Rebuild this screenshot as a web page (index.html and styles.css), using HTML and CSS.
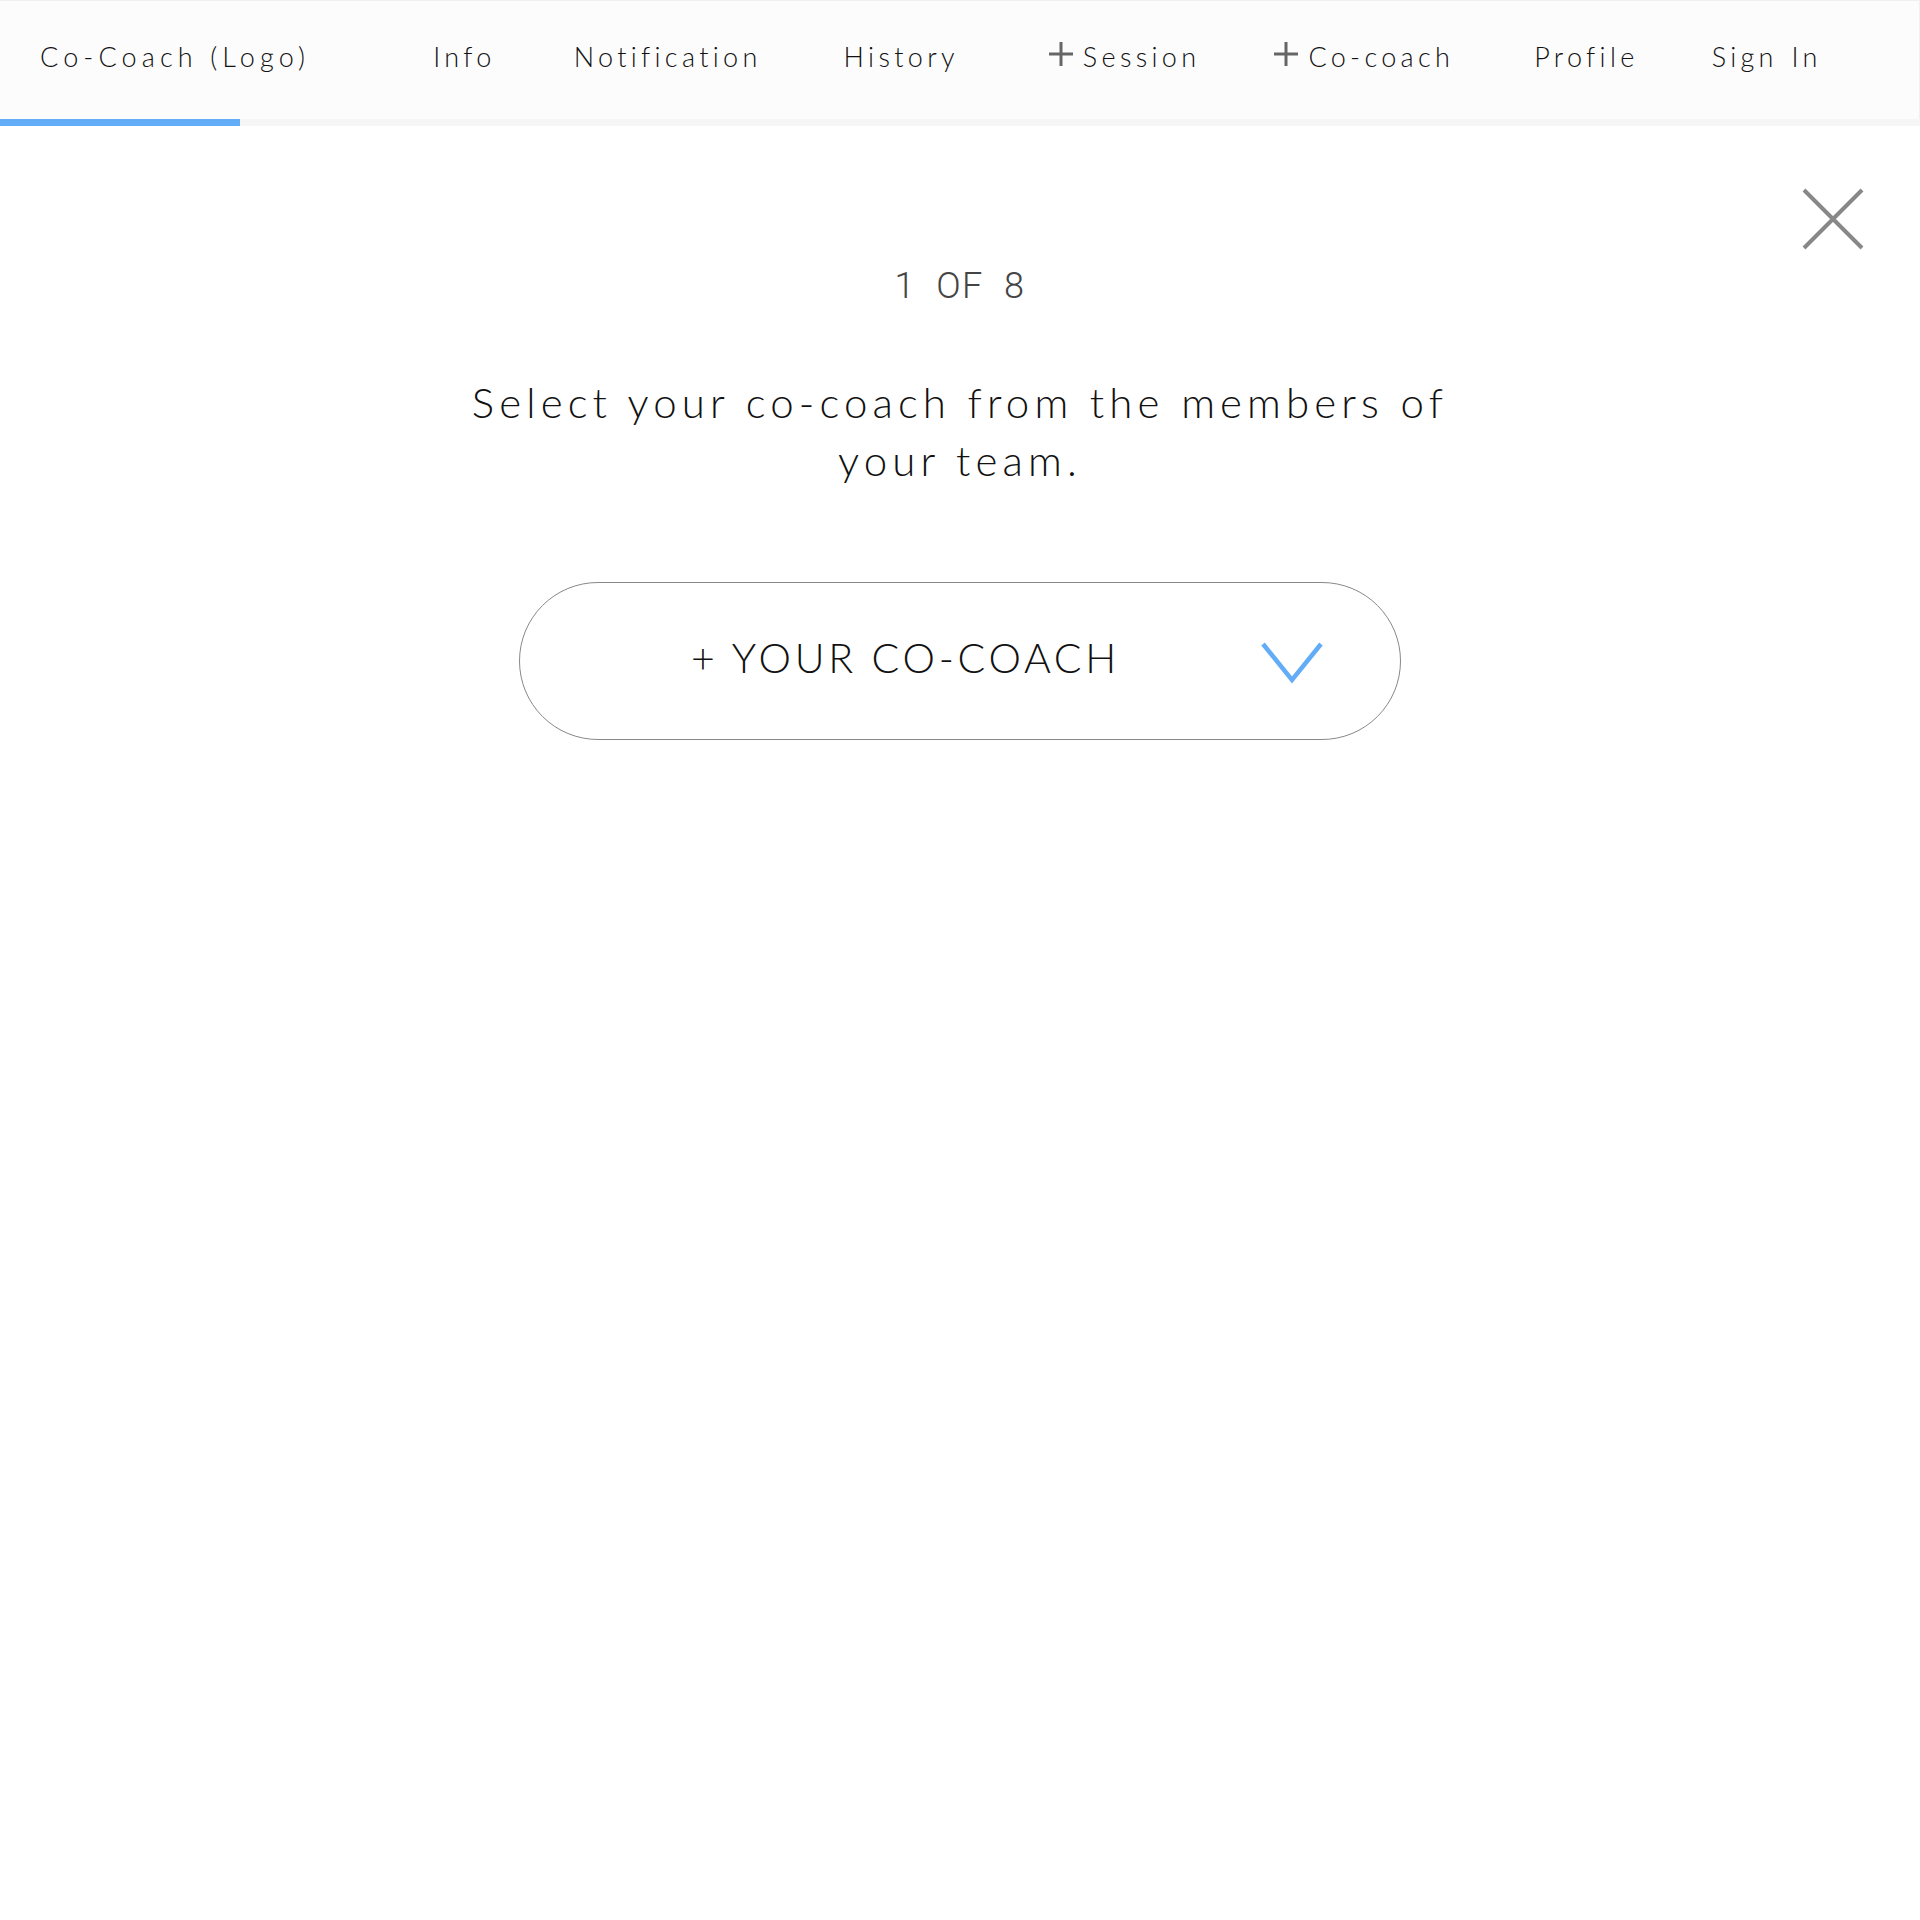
FILE: index.html
```html
<!DOCTYPE html>
<html lang="en">
<head>
<meta charset="utf-8">
<title>Co-Coach</title>
<link rel="stylesheet" href="styles.css">
</head>
<body>
<header class="topbar">
  <nav class="nav">
    <a class="logo">Co-Coach (Logo)</a>
    <ul class="menu">
      <li class="item">Info</li>
      <li class="item item-notification">Notification</li>
      <li class="item item-history">History</li>
      <li class="item item-session"><svg class="plus" viewBox="0 0 24 24"><path d="M12 0V24M0 12H24"/></svg>Session</li>
      <li class="item item-cocoach"><svg class="plus" viewBox="0 0 24 24"><path d="M12 0V24M0 12H24"/></svg>Co-coach</li>
      <li class="item item-profile">Profile</li>
      <li class="item item-signin">Sign In</li>
    </ul>
  </nav>
  <div class="progress"><div class="progress-fill"></div></div>
</header>
<main class="wizard">
  <button class="close" aria-label="Close"><svg viewBox="0 0 62 62"><path d="M2 2L60 60M60 2L2 60"/></svg></button>
  <div class="step">1 OF 8</div>
  <h1 class="prompt">Select your co-coach from the members of your team.</h1>
  <div class="select">
    <span class="select-label">+ YOUR CO-COACH</span>
    <svg class="chevron" viewBox="0 0 62 42"><path d="M2 2L31 38L60 2"/></svg>
  </div>
</main>
</body>
</html>
```
FILE: styles.css
```css
html, body {
  margin: 0;
  padding: 0;
  background: #ffffff;
}
body {
  font-family: Lato, "Noto Sans", sans-serif;
  font-weight: 300;
  color: #111111;
}
.topbar {
  display: flex;
  flex-direction: column;
}
.nav {
  height: 119px;
  box-sizing: border-box;
  border-top: 1px solid #f0f0f0;
  border-right: 1px solid #f0f0f0;
  background: #fcfcfc;
  display: flex;
  align-items: center;
  padding: 0 0 8px 40px;
}
.logo {
  font-size: 27px;
  letter-spacing: 0.19em;
  color: #111;
  white-space: nowrap;
}
.menu {
  list-style: none;
  margin: 0 0 0 123px;
  padding: 0;
  display: flex;
  align-items: center;
  gap: 80px;
}
.item {
  font-size: 27px;
  letter-spacing: 0.16em;
  word-spacing: 2px;
  color: #111;
  display: flex;
  align-items: center;
  white-space: nowrap;
}
.item-notification { margin-left: -2px; }
.item-history { margin-left: 2px; }
.item-session { margin-left: 10px; }
.item-cocoach { margin-left: -6px; }
.item-profile { margin-left: 0; }
.item-signin { margin-left: -7px; }
.plus {
  width: 24px;
  height: 24px;
  margin-right: 10px;
  margin-top: -4px;
  stroke: #666;
  stroke-width: 3;
  fill: none;
}
.progress {
  height: 7px;
  background: #f6f6f6;
}
.progress-fill {
  width: 240px;
  height: 7px;
  background: #63adf8;
}
.wizard {
  position: relative;
  display: flex;
  flex-direction: column;
  align-items: center;
  padding-top: 139px;
}
.close {
  position: absolute;
  top: 62px;
  right: 56px;
  width: 62px;
  height: 62px;
  padding: 0;
  border: 0;
  background: none;
}
.close svg {
  width: 62px;
  height: 62px;
  stroke: #888;
  stroke-width: 4;
  fill: none;
  display: block;
}
.step {
  font-family: Roboto, "Liberation Sans", Arial, sans-serif;
  font-weight: 300;
  font-size: 36px;
  line-height: 43px;
  color: #444;
  letter-spacing: 1.5px;
  word-spacing: 10px;
}
.prompt {
  margin: 65px 0 0;
  max-width: 1010px;
  font-size: 42px;
  font-weight: 300;
  line-height: 58px;
  letter-spacing: 0.122em;
  text-align: center;
  color: #111;
}
.select {
  margin-top: 93px;
  width: 882px;
  height: 158px;
  box-sizing: border-box;
  border: 1.5px solid #888;
  border-radius: 80px;
  display: flex;
  align-items: center;
  padding: 0 77px 0 30px;
}
.select-label {
  flex: 1;
  text-align: center;
  font-size: 41px;
  letter-spacing: 0.09em;
  color: #111;
  margin-bottom: 8px;
}
.chevron {
  width: 62px;
  height: 42px;
  margin-top: 4px;
  stroke: #63adf8;
  stroke-width: 4.5;
  fill: none;
}
```
